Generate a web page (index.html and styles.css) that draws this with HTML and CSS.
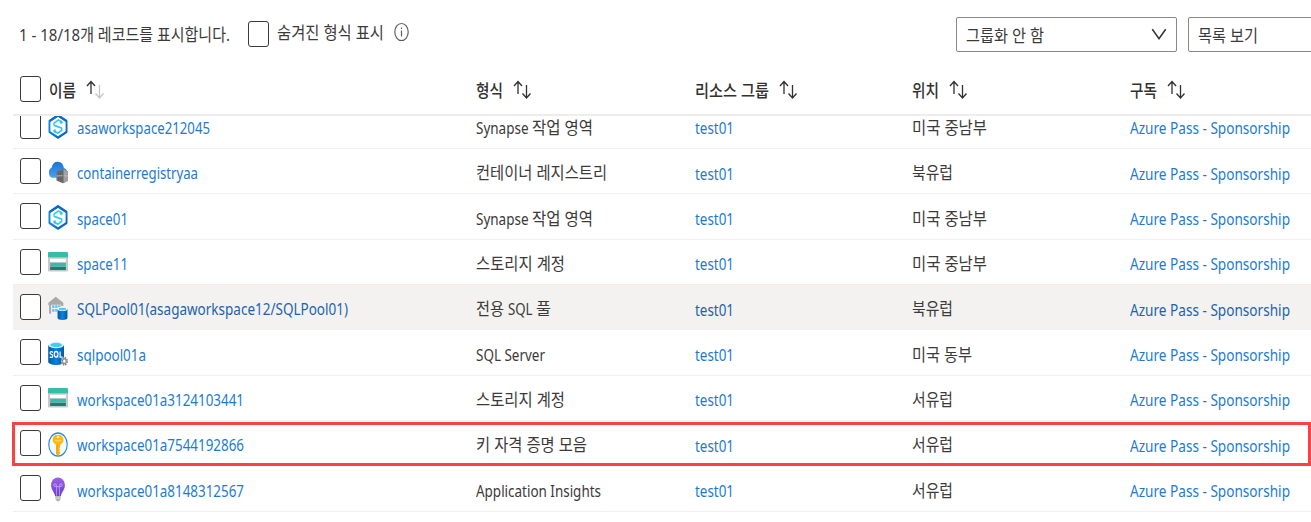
FILE: index.html
```
<!DOCTYPE html>
<html lang="ko">
<head>
<meta charset="utf-8">
<title>리소스</title>
<link rel="stylesheet" href="styles.css">
</head>
<body>
<svg class="defs" aria-hidden="true">
  <defs>
    <linearGradient id="g-hex" x1="0" y1="0" x2="1" y2="1"><stop offset="0" stop-color="#1490df"/><stop offset=".5" stop-color="#0a80d8"/><stop offset="1" stop-color="#0b58b0"/></linearGradient>
    <linearGradient id="g-bulb" x1="0" y1="0" x2="0" y2="1"><stop offset="0" stop-color="#9b62e6"/><stop offset="1" stop-color="#6a3fc9"/></linearGradient>
    <linearGradient id="g-db" x1="0" y1="0" x2="1" y2="0"><stop offset="0" stop-color="#005ba1"/><stop offset=".5" stop-color="#0d7fdd"/><stop offset="1" stop-color="#005ba1"/></linearGradient>
    <linearGradient id="g-cloud" x1="0" y1="0" x2="0" y2="1"><stop offset="0" stop-color="#1a72d4"/><stop offset="1" stop-color="#4ba0f0"/></linearGradient>
    <symbol id="synapse" viewBox="0 0 18 18" preserveAspectRatio="none">
      <path d="M9 1 16.700 5v8L9 17 1.300 13V5Z" fill="#fff" stroke="url(#g-hex)" stroke-width="1.700" stroke-linejoin="round"/>
      <path d="M1.500 5 9 1 16.600 5" fill="none" stroke="#0f6cbd" stroke-width="1.700"/>
      <path d="M12.600 5.800 9.400 4.300 5.300 6.600 5.600 8.200 12.300 10.200 12.400 11.600 8.800 13.800 5.400 12.200" fill="none" stroke="#35c9ee" stroke-width="1.300" stroke-linejoin="round"/>
      <circle cx="11.900" cy="5.900" r="1.300" fill="#35c9ee"/><circle cx="6" cy="12.200" r="1.300" fill="#35c9ee"/>
    </symbol>
    <symbol id="registry" viewBox="0 0 18 18" preserveAspectRatio="none">
      <path d="M3.800 12.800A3.900 3.900 0 0 1 3.300 5.400 5.600 5.600 0 0 1 8.700 1.200a5.700 5.700 0 0 1 5.600 4.600A3.700 3.700 0 0 1 17.300 9.500v3.300Z" fill="url(#g-cloud)"/>
      <path d="M7.600 8.300 13.500 6.500 18 8.300v6.600l-4.500 1.900-5.900-2Z" fill="#707070"/>
      <path d="M13.500 6.500 18 8.300v6.600l-4.500 1.900Z" fill="#a0a0a0"/>
      <path d="M7.600 11.500 13.500 11.300l4.500.2" fill="none" stroke="#c4c4c4" stroke-width=".6"/>
      <path d="M9.600 8.400v2.500M11.500 7.900v3M9.600 12v3M11.500 12v3.700M13.500 6.800V16.600" fill="none" stroke="#555" stroke-width=".6"/>
    </symbol>
    <symbol id="storage" viewBox="0 0 18 18" preserveAspectRatio="none">
      <path d="M0 5h18v9.500q0 1-1 1H1q-1 0-1-1Z" fill="#c9c9c9"/>
      <path d="M0 2.300q0-.8.8-.8h16.400q.8 0 .8.8V5.200H0Z" fill="#32bea8"/>
      <path d="M1.900 6.300h14.200v2.400H1.900Z" fill="#fff"/>
      <path d="M1.900 9.200h14.200v2.500H1.900Z" fill="#35bda9"/>
      <path d="M1.900 12h14.200v2.400H1.900Z" fill="#1b7e70"/>
    </symbol>
    <symbol id="pool" viewBox="0 0 18 18" preserveAspectRatio="none">
      <path d="M.3 4.800 7 .5l6.800 4.300v2.400h-2V6.300H2.800v6.500H1V6.700H.3Z" fill="#a9a9a9"/>
      <path d="M3.800 6.600h2v2h-2zM6.500 6.600h2v2h-2zM9.200 6.600h2v1.400h-2zM3.800 9.400h2v2h-2zM6.500 9.400h1.500v2H6.500z" fill="#43cdee"/>
      <path d="M8.600 9.300h8.900v6.600c0 .8-2 1.400-4.450 1.400S8.600 16.700 8.600 15.900Z" fill="url(#g-db)"/>
      <ellipse cx="13.050" cy="9.300" rx="4.450" ry="1.500" fill="#eef7fb"/><ellipse cx="13.050" cy="9.400" rx="3.400" ry="1" fill="#45d2ef"/>
    </symbol>
    <symbol id="server" viewBox="0 0 18 18" preserveAspectRatio="none">
      <path d="M.2 2.800h14.200V15c0 1.300-3.200 2.300-7.100 2.300S.2 16.300.2 15Z" fill="url(#g-db)"/>
      <ellipse cx="7.300" cy="2.800" rx="7.100" ry="2.400" fill="#e8f3fa"/><ellipse cx="7.300" cy="2.900" rx="5.300" ry="1.600" fill="#45cdea"/>
      <path d="M4.400 8.200C3.500 7.300 1.700 7.500 1.800 8.700c.1 1.200 2.500.8 2.500 2.100 0 1.200-1.900 1.300-2.700.5M9.200 11.800 8 10.500M10.900 7.500v4.100h2.200" fill="none" stroke="#fff" stroke-width="1"/>
      <ellipse cx="7.300" cy="9.600" rx="1.700" ry="2" fill="none" stroke="#fff"/>
      <circle cx="14.700" cy="14.500" r="2.900" fill="#fff"/>
      <circle cx="14.700" cy="14.500" r="2.600" fill="none" stroke="#858585" stroke-width="1.300" stroke-dasharray="1.300 .740"/>
      <circle cx="14.700" cy="14.500" r="1.700" fill="none" stroke="#909090" stroke-width="1.200"/>
    </symbol>
    <symbol id="vault" viewBox="0 0 18 18" preserveAspectRatio="none">
      <circle cx="9" cy="9" r="8.300" fill="#f3f9fe" stroke="#2589dc" stroke-width="1"/>
      <path d="M6.300 2.200h5.200l2.300 2.100v2.700l-2.900 2.600v1.600l-.8.800.8.900-.8.900.8 1v.8L9 17.300 7.400 15.700V9.600L4.300 7V4.200Z" fill="#fdb913"/>
      <path d="M9 8.500v8.800L7.400 15.700V9.800Z" fill="#f5a50f"/>
      <ellipse cx="9" cy="3.700" rx="1.300" ry=".8" fill="#fff4c6"/><path d="M6 6.300h6" stroke="#ffd35a"/>
    </symbol>
    <symbol id="bulb" viewBox="0 0 18 18" preserveAspectRatio="none">
      <path d="M9 .4c3.700 0 6.200 2.600 6.200 5.700 0 3.200-3.200 4.700-3.600 7.700H6.400C6 10.800 2.800 9.300 2.800 6.100 2.800 3 5.300.4 9 .4Z" fill="url(#g-bulb)"/>
      <path d="M7.700 13.500V6.600C7.700 4.500 5 4.500 5.200 6c.2 1.100 1.500.9 3.800.9s3.600.2 3.800-.9c.2-1.500-2.500-1.500-2.500.6v6.900" fill="none" stroke="#b794ef" stroke-width=".8"/>
      <path d="M6.600 13.800h4.800v2L10 17.500H8l-1.400-1.700Z" fill="#b3b3b3"/><path d="M6.600 15.200h4.800" stroke="#eee" stroke-width=".6"/>
    </symbol>
  </defs>
</svg>
<main class="page">
  <div class="toolbar">
    <span class="fit count" data-w="211"><span>1 - 18/18개 레코드를 표시합니다.</span></span>
    <label class="hidden-types"><i class="check"></i><span class="fit" data-w="107"><span>숨겨진 형식 표시</span></span>
      <svg class="info" viewBox="0 0 16 20"><ellipse cx="8" cy="10" rx="6.700" ry="8.500"/><path d="M8 8.500v6M8 5.500v1.500"/></svg></label>
    <div class="select group"><span class="fit" data-w="78"><span>그룹화 안 함</span></span><svg class="chevron" viewBox="0 0 16 12"><path d="m1.300 1.200 6.700 9.500 6.700-9.500"/></svg></div>
    <div class="select view"><span class="fit" data-w="60"><span>목록 보기</span></span></div>
  </div>
  <div class="grid-head" id="head"></div>
  <div class="grid-body" id="body"></div>
</main>
<script src="app.js"></script>
</body>
</html>
```
FILE: styles.css
```
* { box-sizing: border-box; }
body {
  margin: 0;
  background: #fff;
  color: #3b3a39;
  font: 17px/24px "Noto Sans", "Noto Sans CJK KR", sans-serif;
  overflow: hidden;
}
.defs { position: absolute; width: 0; height: 0; }
.page { width: 1311px; height: 522px; overflow: hidden; }

.fit { display: inline-block; flex: none; white-space: nowrap; height: 24px; }
.fit > span { display: inline-block; transform-origin: 0 50%; }

.toolbar { display: flex; height: 67px; padding: 17px 0 0 19px; align-items: flex-start; }
.count { margin-top: 6px; }
.hidden-types { display: flex; align-items: flex-start; margin: 4px 0 0 18px; }
.hidden-types .fit { margin-left: 8px; }
.check {
  flex: none;
  width: 21px;
  height: 26px;
  border: 1.500px solid #3b3a39;
  border-radius: 3px;
  background: #fff;
}
.info { width: 17px; height: 20px; margin: 1px 0 0 9px; fill: none; stroke: #605e5c; stroke-width: 1.200; }
.select {
  display: flex;
  flex: none;
  height: 35px;
  align-items: center;
  padding: 3px 9px 0;
  border: 1px solid #8a8886;
  border-radius: 2px;
}
.group { width: 221px; margin-left: auto; justify-content: space-between; }
.view { width: 135px; margin: 0 -12px 0 11px; }
.chevron { width: 16px; height: 12px; margin-bottom: 4px; fill: none; stroke: #323130; stroke-width: 1.500; }

.grid-head, .row {
  display: grid;
  grid-template-columns: 463px 219px 217px 218px 1fr;
  margin-left: 13px;
}
.grid-head { height: 49px; padding-top: 9px; border-bottom: 2px solid #eeedec; font-weight: 500; color: #323130; }
.grid-head > div { display: flex; align-items: flex-start; }
.grid-head .check { margin: 0 8px 0 7px; }
.grid-head .fit { margin-top: 3px; }
.sort { width: 19px; height: 20px; margin: 4px 0 0 10px; fill: none; stroke: #323130; stroke-width: 1.300; }
.sort .faint { stroke: #c8c6c4; }

.grid-body { height: 406px; overflow: hidden; }
.row { position: relative; height: 45.350px; border-bottom: 1.500px solid #f0efee; }
.row:first-child { margin-top: -12.500px; }
.row > div { display: flex; align-items: flex-start; padding-top: 12.400px; }
.row > .name { padding-top: 9px; }
.name .check { margin: 0 7px 0 7px; }
.name .icon { width: 20px; height: 25px; margin: 1.700px 9px 0 0; }
.name .fit { margin-top: 3.400px; }
.row > .link { padding-top: 12.700px; }
.link, .name { color: #1b7bd3; }
.hover { background: #f3f2f1; }
.hover .link, .hover.row .name { color: #1c63ae; }
.marked::after {
  content: "";
  position: absolute;
  inset: 1.500px 0 -.5px -1px;
  border: 3px solid #fb4141;
}
```
FILE: app.js
```
// Each text run carries the width it occupies in its column.
const run = (text, width) => `<span class="fit" data-w="${width}"><span>${text}</span></span>`;
const sort = faint => `<svg class="sort" viewBox="0 0 19 20"><path d="M5 14V1.500M1 6l4-4.500L9 6"/><path ${faint ? 'class="faint"' : ''} d="M13.500 5v13M9.500 13.500l4 4.500 4-4.500"/></svg>`;

const heads = [['이름', 27], ['형식', 27], ['리소스 그룹', 74], ['위치', 27], ['구독', 27]];
document.getElementById('head').innerHTML = heads.map(([text, width], i) =>
  `<div>${i ? '' : '<i class="check"></i>'}${run(text, width)}${sort(i === 0)}</div>`).join('');

const synapse = [['Synapse&nbsp;', 56], ['작업 영역', 61]];
const storageType = [['스토리지 계정', 89]];
const us = ['미국 중남부', 75], north = ['북유럽', 41], west = ['서유럽', 41];
const rows = [
  ['synapse', 'asaworkspace212045', 133, synapse, us],
  ['registry', 'containerregistryaa', 121, [['컨테이너 레지스트리', 131]], north],
  ['synapse', 'space01', 51, synapse, us],
  ['storage', 'space11', 51, storageType, us],
  ['pool', 'SQLPool01(asagaworkspace12/SQLPool01)', 271, [['전용&nbsp;', 32], ['SQL&nbsp;', 28], ['풀', 15]], north, 'hover'],
  ['server', 'sqlpool01a', 69, [['SQL Server', 69]], ['미국 동부', 60]],
  ['storage', 'workspace01a3124103441', 167, storageType, west],
  ['vault', 'workspace01a7544192866', 167, [['키 자격 증명 모음', 111]], west, 'marked'],
  ['bulb', 'workspace01a8148312567', 167, [['Application Insights', 125]], west]
];
document.getElementById('body').innerHTML = rows.map(([icon, name, width, type, place, state]) => `
  <div class="row ${state || ''}">
    <div class="name"><i class="check"></i><svg class="icon"><use href="#${icon}" width="20" height="25"/></svg>${run(name, width)}</div>
    <div>${type.map(t => run(...t)).join('')}</div>
    <div class="link">${run('test01', 39)}</div>
    <div>${run(...place)}</div>
    <div class="link">${run('Azure Pass - Sponsorship', 160)}</div>
  </div>`).join('');

document.querySelectorAll('.fit').forEach(el => {
  const inner = el.firstElementChild;
  const scale = el.dataset.w / inner.getBoundingClientRect().width;
  el.style.width = el.dataset.w + 'px';
  inner.style.transform = `scaleX(${scale})`;
});
```
